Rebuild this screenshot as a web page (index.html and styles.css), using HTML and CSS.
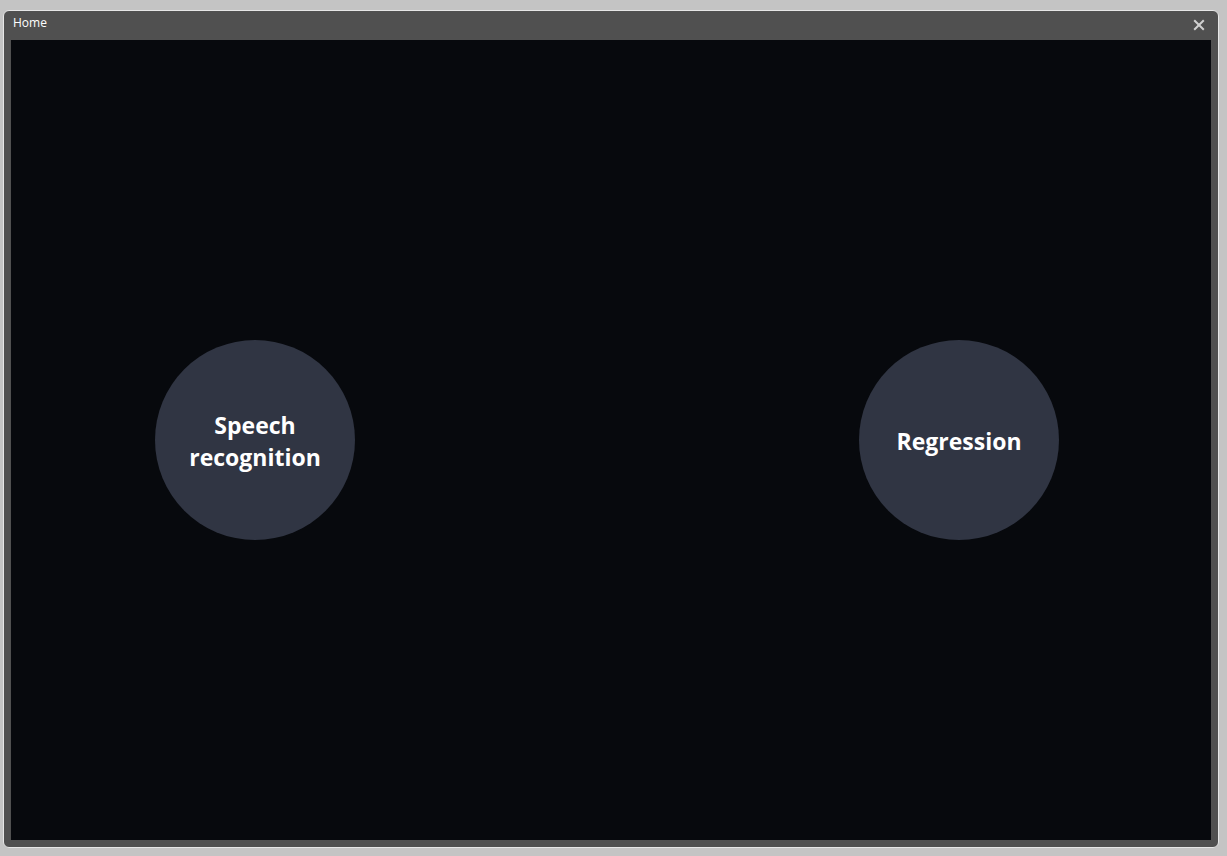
FILE: index.html
```
<!DOCTYPE html>
<html lang="en">
<head>
<meta charset="utf-8">
<title>Home</title>
<link rel="stylesheet" href="styles.css">
</head>
<body>
<div class="window">
  <header class="titlebar">
    <h1 class="title">Home</h1>
    <button class="close" type="button" aria-label="Close">
      <svg width="12" height="12" viewBox="0 0 12 12" aria-hidden="true"><path d="M1.2 1.2L10.8 10.8M10.8 1.2L1.2 10.8"/></svg>
    </button>
  </header>
  <main class="content">
    <button class="choice" type="button">Speech recognition</button>
    <button class="choice" type="button">Regression</button>
  </main>
</div>
</body>
</html>
```
FILE: styles.css
```
* {
  box-sizing: border-box;
}

body {
  margin: 0;
  min-height: 100vh;
  padding: 10px 8px 8px 3px;
  display: flex;
  background: #c4c4c4;
  color: #fff;
  font-family: "Segoe UI", "Open Sans", "Noto Sans", sans-serif;
}

.window {
  flex: 1;
  display: flex;
  flex-direction: column;
  padding: 0 7px 7px;
  border: 1px solid #e6e6e6;
  border-radius: 6px;
  background: #505050;
}

.titlebar {
  height: 29px;
  display: flex;
  align-items: center;
  justify-content: space-between;
  padding: 0 6px 2px 2px;
}

.title {
  margin: 0;
  padding-bottom: 4px;
  font-size: 12px;
  line-height: 16px;
  font-weight: 400;
}

.close {
  display: flex;
  padding: 0;
  border: 0;
  background: none;
}

.close path {
  fill: none;
  stroke: #d0d0d0;
  stroke-width: 2;
}

.content {
  flex: 1;
  display: flex;
  align-items: center;
  justify-content: space-between;
  padding: 0 152px 0 144px;
  background: #07090d;
}

.choice {
  width: 200px;
  height: 200px;
  padding: 2px 20px 0;
  border: 0;
  border-radius: 50%;
  background: #303543;
  color: #fff;
  font-family: inherit;
  font-size: 23px;
  font-weight: 700;
  line-height: 32px;
}
```
